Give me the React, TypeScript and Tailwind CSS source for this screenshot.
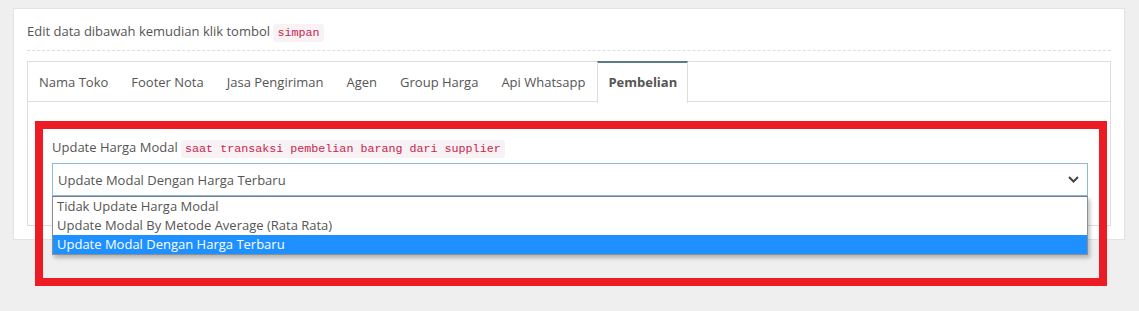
import React from 'react';

// Settings page: "Pembelian" tab with an open select list and a red annotation box

const tabs = ['Nama Toko', 'Footer Nota', 'Jasa Pengiriman', 'Agen', 'Group Harga', 'Api Whatsapp', 'Pembelian'];

const options = [
    'Tidak Update Harga Modal',
    'Update Modal By Metode Average (Rata Rata)',
    'Update Modal Dengan Harga Terbaru',
];

const Code = ({ children }: { children: React.ReactNode }) => (
    <code className="rounded-[3px] bg-[#f9f2f4] px-[4px] py-[2px] text-[11.7px] text-[#c7254e] [font-family:'Liberation_Mono',monospace]">
        {children}
    </code>
);

const App = () => {
    const active = 'Pembelian';
    const selected = options[2];

    return (
        <div className="relative h-[311px] w-full bg-[#efefef] pl-[13px] pr-[14px] pt-[8px] text-[13px] leading-[18px] text-[#555] [font-family:'Open_Sans',sans-serif]">
            {/* Card */}
            <div className="border border-[#e2e2e2] bg-white px-[13px] pb-[13px] pt-[13px]">
                <div className="border-b border-dashed border-[#dedede] pb-[8px]">
                    Edit data dibawah kemudian klik tombol <Code>simpan</Code>
                </div>

                {/* Tabs */}
                <div className="mt-[10px] border border-[#ddd]">
                    <div className="flex h-[40px] border-b border-[#ddd]">
                        {tabs.map((t) =>
                            t === active ? (
                                <div
                                    key={t}
                                    className="relative z-10 -mb-px -mt-px mr-[2px] h-[42px] border-x border-t-2 border-[#ddd] border-t-[#5d7c89] bg-white px-[10px] pt-[10px] font-bold"
                                >
                                    {t}
                                </div>
                            ) : (
                                <div key={t} className="mr-[1px] px-[11px] py-[11px]">
                                    {t}
                                </div>
                            )
                        )}
                    </div>

                    {/* Tab panel */}
                    <div className="pb-[29px] pl-[24px] pr-[22px] pt-[36px]">
                        <div className="mb-[5px]">
                            Update Harga Modal <Code>saat transaksi pembelian barang dari supplier</Code>
                        </div>
                        <div className="relative">
                            <div className="flex h-[33px] items-center justify-between border border-[#8fbad8] pl-[5px] pr-[8px]">
                                <span>{selected}</span>
                                <svg width="11" height="7" viewBox="0 0 11 7" fill="none">
                                    <polyline points="1,1 5.5,5.5 10,1" stroke="#444" strokeWidth="2" />
                                </svg>
                            </div>

                            {/* Open option list */}
                            <div className="absolute left-0 right-0 top-[33px] z-20 border border-[#8a8f95] border-t-[#6f7f8e] bg-white shadow-[2px_3px_4px_rgba(0,0,0,0.25)]">
                                {options.map((o) => (
                                    <div
                                        key={o}
                                        className={`h-[19px] pl-[4px] leading-[19px] ${o === selected ? 'bg-[#1e90ff] text-white' : ''}`}
                                    >
                                        {o}
                                    </div>
                                ))}
                            </div>
                        </div>
                    </div>
                </div>
            </div>

            {/* Red annotation box */}
            <div className="pointer-events-none absolute left-[35px] top-[121px] z-30 h-[165px] w-[1072px] border-[8px] border-[#ed1c24]" />
        </div>
    );
};

export default App;
